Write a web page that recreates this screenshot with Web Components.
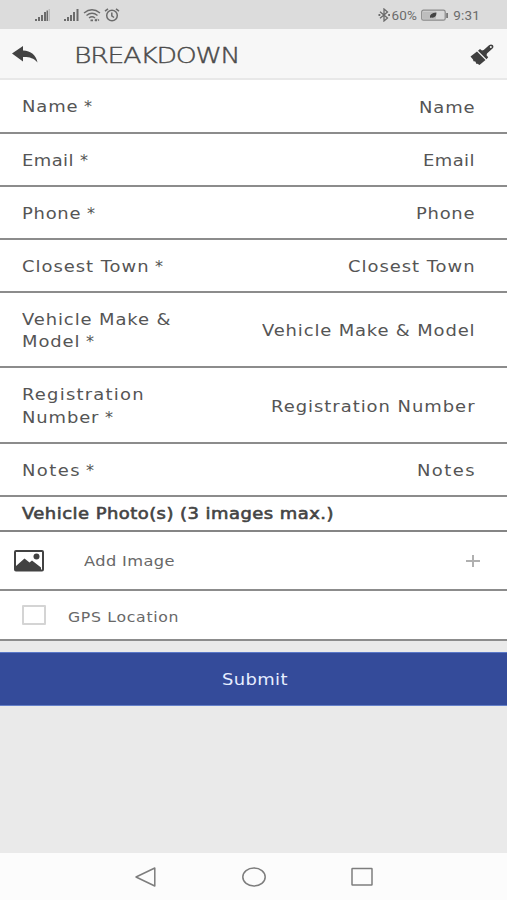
<!DOCTYPE html>
<html lang="en">
<head>
<meta charset="utf-8">
<meta name="viewport" content="width=device-width, initial-scale=1">
<title>Breakdown</title>
<style>
  body {
    margin: 0;
    font-family: "DejaVu Sans", Inter, sans-serif;
    color: #555;
    background: #eaeaea;
  }
</style>
</head>
<body>
<app-screen>
  <status-bar slot="top" battery="60%" time="9:31"></status-bar>
  <title-bar slot="top"><fit-text width="165" stretch="1.3">BREAKDOWN</fit-text></title-bar>

  <form-row style="height: 54px">
    <fit-text slot="label" width="54">Name</fit-text>
    <fit-text width="54">Name</fit-text>
  </form-row>
  <form-row>
    <fit-text slot="label" width="50">Email</fit-text>
    <fit-text width="50">Email</fit-text>
  </form-row>
  <form-row>
    <fit-text slot="label" width="57">Phone</fit-text>
    <fit-text width="57">Phone</fit-text>
  </form-row>
  <form-row>
    <fit-text slot="label" width="125">Closest Town</fit-text>
    <fit-text width="125">Closest Town</fit-text>
  </form-row>
  <form-row style="height: 75px">
    <fit-text slot="first" width="147">Vehicle Make &amp;</fit-text>
    <fit-text slot="label" width="56">Model</fit-text>
    <fit-text width="211">Vehicle Make &amp; Model</fit-text>
  </form-row>
  <form-row style="height: 76px">
    <fit-text slot="first" width="120">Registration</fit-text>
    <fit-text slot="label" width="75">Number</fit-text>
    <fit-text width="202">Registration Number</fit-text>
  </form-row>
  <form-row>
    <fit-text slot="label" width="56">Notes</fit-text>
    <fit-text width="56">Notes</fit-text>
  </form-row>

  <section-title><fit-text width="310">Vehicle Photo(s) (3 images max.)</fit-text></section-title>
  <image-row><fit-text width="89">Add Image</fit-text></image-row>
  <check-row><fit-text width="109">GPS Location</fit-text></check-row>
  <submit-button><fit-text width="64">Submit</fit-text></submit-button>

  <nav-bar slot="bottom"></nav-bar>
</app-screen>

<script>
function attach(el, html) {
  el.attachShadow({ mode: 'open' }).innerHTML = html;
}

/**
 * Wide-set text: glyphs are stretched sideways, then tracked out
 * so that the line fills the given width
 */
class FitText extends HTMLElement {
  constructor() {
    super();
    attach(this, `
      <style>
        :host { display: inline-block; white-space: nowrap; text-align: left; }
        span { display: inline-block; transform-origin: 0 50%; }
      </style>
      <span><slot></slot></span>
    `);
  }

  connectedCallback() {
    const span = this.shadowRoot.querySelector('span');
    const width = Number(this.getAttribute('width'));
    const stretch = Number(this.getAttribute('stretch')) || 1.12;
    const gaps = this.textContent.length - 1;
    const natural = span.getBoundingClientRect().width;
    const spacing = ((width + 1.5) / stretch - natural) / gaps;
    this.style.width = `${width}px`;
    span.style.letterSpacing = `${spacing}px`;
    span.style.marginRight = '-20px';
    span.style.transform = `scaleX(${stretch})`;
  }
}

class AppScreen extends HTMLElement {
  constructor() {
    super();
    attach(this, `
      <style>
        :host { display: flex; flex-direction: column; height: 900px; overflow: hidden; }
        main { flex: 1; }
      </style>
      <slot name="top"></slot>
      <main><slot></slot></main>
      <slot name="bottom"></slot>
    `);
  }
}

class StatusBar extends HTMLElement {
  constructor() {
    super();
    attach(this, `
      <style>
        :host {
          display: flex;
          justify-content: space-between;
          align-items: center;
          box-sizing: border-box;
          height: 29px;
          padding: 1px 27px 0 35px;
          background: #dcdcdc;
          color: #6b6b6b;
          font: 13.5px Roboto, sans-serif;
        }
        div { display: flex; align-items: center; }
        svg { display: block; }
        .percent, .time { letter-spacing: .2px; }
        .battery { margin: 0 4px 0 4px; }
      </style>
      <div>
        <svg width="16" height="14" fill="#6b6b6b">
          <path d="M0 11h2v2H0zM3 9h2v4H3zM6 7h2v6H6zM9 4h2v9H9zM11.500 2.500h1.500V13h-1.500z"/><path fill="#bbb" d="M13.500 1h1.500v12h-1.500z"/>
        </svg>
        <svg width="17" height="14" fill="#6b6b6b" style="margin-left: 12px">
          <path d="M1 11h2v2H1zM4 9h2v4H4zM7 7h2v6H7zM10 4h2v9h-2zM13.500 1h2v12h-2z"/>
        </svg>
        <svg width="18" height="14" fill="none" stroke="#6b6b6b" stroke-width="1.400" style="margin-left: 3px">
          <path d="M1 5Q9-1.500 17 5M3.500 7.500Q9 3 14.500 7.500M6 10q3-2.500 6 0"/>
          <path fill="#6b6b6b" stroke="none" d="M7.500 11.500h2.500v1.700H7.500zM11.500 12l1.500-1.500 1 1v1.700h-2zM14.500 10.500l2 1.500-1.500 1.200z"/>
        </svg>
        <svg width="16" height="14" fill="none" stroke="#6b6b6b" stroke-width="1.500" style="margin-left: 3px">
          <circle cx="8" cy="7.500" r="5.300"/><path d="M7.800 4.500v3.300l2.200 1.700M1 3.200 4 .8M15 3.200 12 .8"/>
        </svg>
      </div>
      <div>
        <svg width="13" height="14" fill="none" stroke="#6b6b6b" stroke-width="1.300">
          <path d="M2 3.800 9.500 10 6 13V1l3.500 3-7.500 6.200"/><path d="M.5 7h1.800M10.200 7H12" stroke-width="1.800"/>
        </svg>
        <span class="percent"></span>
        <svg class="battery" width="28" height="13">
          <rect x=".7" y="1.200" width="23.500" height="10" rx="1.800" fill="#d8d8d8" stroke="#8a8a8a" stroke-width="1.200"/>
          <path fill="#bdbdbd" d="M2 2.600h13v7.300H2z"/>
          <path fill="#444" d="M9 9q-1-5 6.500-5.500Q15.500 9.500 10 8.500z"/>
          <path fill="#777" d="M25.200 4h1.800v5h-1.800z"/>
        </svg>
        <span class="time"></span>
      </div>
    `);
  }

  connectedCallback() {
    this.shadowRoot.querySelector('.percent').textContent = this.getAttribute('battery');
    this.shadowRoot.querySelector('.time').textContent = this.getAttribute('time');
  }
}

class TitleBar extends HTMLElement {
  constructor() {
    super();
    attach(this, `
      <style>
        :host {
          display: flex;
          align-items: center;
          box-sizing: border-box;
          height: 51px;
          padding: 2px 13px 0 12px;
          background: #f7f7f7;
          border-bottom: 2px solid #e8e8e8;
          color: #4a4a4a;
          font-family: "DejaVu Sans Light", "DejaVu Sans", sans-serif;
          font-weight: 200;
          font-size: 20.500px;
          -webkit-text-stroke: .4px #4a4a4a;
        }
        .text { flex: 1; margin: 2px 0 0 36px; }
      </style>
      <svg width="26" height="18" fill="#424242">
        <path d="M0 7.500 11 0v4.500C19 4.800 24 9 25.500 16.500 21.500 11.800 17 10.800 11 11v4.500z"/>
      </svg>
      <div class="text"><slot></slot></div>
      <svg width="24" height="22" viewBox="0 0 24 22" fill="#404040">
        <path d="M.5 12.500 7 7.500l8.500 8.500-6 5-2-1.200-1 .2-1.200-2.500-1.800-.2L3 15.500z"/>
        <path d="M8 6.700 10 5l2 1.500 1.700-.5L19 1.300q2-1.500 3.700-.2 1.500 1.700-.2 3.500L17 9.500l-.5 1.700 1.700 2-1.700 2z"/>
        <circle cx="20.800" cy="3" r="1" fill="#f7f7f7"/>
      </svg>
    `);
  }
}

class FormRow extends HTMLElement {
  constructor() {
    super();
    attach(this, `
      <style>
        :host {
          display: flex;
          align-items: center;
          justify-content: space-between;
          box-sizing: border-box;
          height: 53px;
          padding: 3px 34px 0 22px;
          background: #fff;
          border-bottom: 2px solid #8c8c8c;
          font-size: 16px;
          line-height: 22.500px;
        }
        .star { margin-left: 8px; }
        .value { margin-top: 1px; }
      </style>
      <div>
        <div><slot name="first"></slot></div>
        <div><slot name="label"></slot><span class="star">*</span></div>
      </div>
      <div class="value"><slot></slot></div>
    `);
  }
}

class SectionTitle extends HTMLElement {
  constructor() {
    super();
    attach(this, `
      <style>
        :host {
          display: flex;
          align-items: center;
          box-sizing: border-box;
          height: 35px;
          padding-left: 22px;
          background: #fff;
          border-bottom: 2px solid #858585;
          color: #444;
          font-size: 16px;
          -webkit-text-stroke: .6px #444;
        }
      </style>
      <slot></slot>
    `);
  }
}

class ImageRow extends HTMLElement {
  constructor() {
    super();
    attach(this, `
      <style>
        :host {
          display: flex;
          align-items: center;
          box-sizing: border-box;
          height: 59px;
          padding: 0 27px 0 14px;
          background: #fff;
          border-bottom: 2px solid #8c8c8c;
          color: #686868;
          font-size: 14.500px;
        }
        .text { flex: 1; margin-left: 40px; }
      </style>
      <svg width="30" height="22">
        <rect x="1" y="1" width="28" height="19.500" rx="1" fill="#fff" stroke="#424242" stroke-width="2"/>
        <path fill="#424242" d="M2 19v-3l8.500-7.500 5 4 2.500-2 9 7V20H2z"/>
        <circle cx="22.500" cy="6.500" r="3" fill="#424242"/>
      </svg>
      <div class="text"><slot></slot></div>
      <svg width="14" height="12" stroke="#b0b0b0" stroke-width="2"><path d="M0 6h14M7 0v12"/></svg>
    `);
  }
}

class CheckRow extends HTMLElement {
  constructor() {
    super();
    attach(this, `
      <style>
        :host {
          display: flex;
          align-items: center;
          box-sizing: border-box;
          height: 50px;
          padding-left: 22px;
          background: #fff;
          border-bottom: 2px solid #8c8c8c;
          color: #686868;
          font-size: 14px;
        }
        .box {
          box-sizing: border-box;
          width: 24px;
          height: 20px;
          margin-right: 22px;
          border: 2px solid #d4d4d4;
          border-radius: 1px;
        }
        .text { margin-top: 3px; }
      </style>
      <div class="box"></div>
      <div class="text"><slot></slot></div>
    `);
  }
}

class SubmitButton extends HTMLElement {
  constructor() {
    super();
    attach(this, `
      <style>
        :host { display: block; margin-top: 11px; }
        button {
          display: block;
          width: 100%;
          height: 54px;
          padding: 0;
          border: 0;
          border-top: 1px solid #5a78c8;
          border-bottom: 1px solid #6580c8;
          background: #344b9a;
          color: #e6eeff;
          font: 16px "DejaVu Sans", sans-serif;
        }
      </style>
      <button type="button"><slot></slot></button>
    `);
  }
}

class NavBar extends HTMLElement {
  constructor() {
    super();
    attach(this, `
      <style>
        :host {
          display: flex;
          align-items: center;
          justify-content: space-between;
          box-sizing: border-box;
          height: 47px;
          padding: 0 134px 0 135px;
          background: #fcfcfc;
        }
        svg { fill: none; stroke: #7d7d7d; stroke-width: 1.500; stroke-linejoin: round; }
      </style>
      <svg width="21" height="20"><path d="M1 10 19.800 1v18z"/></svg>
      <svg width="24" height="20"><ellipse cx="12" cy="10" rx="11.200" ry="9"/></svg>
      <svg width="22" height="20"><rect x="1" y="1.500" width="20" height="16.500" rx=".5"/></svg>
    `);
  }
}

customElements.define('app-screen', AppScreen);
customElements.define('status-bar', StatusBar);
customElements.define('title-bar', TitleBar);
customElements.define('form-row', FormRow);
customElements.define('section-title', SectionTitle);
customElements.define('image-row', ImageRow);
customElements.define('check-row', CheckRow);
customElements.define('submit-button', SubmitButton);
customElements.define('nav-bar', NavBar);
// last, so the surrounding font styles are in place when widths are measured
customElements.define('fit-text', FitText);
</script>
</body>
</html>
